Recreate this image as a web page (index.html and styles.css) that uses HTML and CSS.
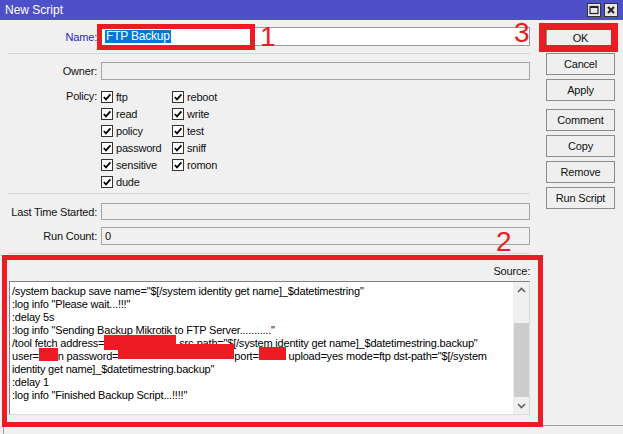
FILE: index.html
```html
<!DOCTYPE html>
<html lang='en'>
  <head>
    <meta charset='UTF-8'/>
    <title>New Script</title>
    <link rel="stylesheet" href="styles.css">
  </head>
  <body>
    <div class='window'>
      <div class='titlebar'>
        <span class='title'>New Script</span>
        <span class='tb-buttons'>
          <span class='tb-btn'>
            <svg width="10" height="10" viewBox="0 0 10 10"><rect x="1" y="1.5" width="8" height="7" fill="none" stroke="#222" stroke-width="1.2"/><line x1="1" y1="2" x2="9" y2="2" stroke="#222" stroke-width="2"/></svg>
          </span>
          <span class='tb-btn'>
            <svg width="10" height="10" viewBox="0 0 10 10"><path d="M2 2 L8 8 M8 2 L2 8" stroke="#222" stroke-width="2"/></svg>
          </span>
        </span>
      </div>

      <div class='main'>
        <div class='form'>
          <div class='row row-name'>
            <label class='lbl lbl-name'>Name:</label>
            <div class='field field-white'><span class='selected'>FTP Backup</span></div>
          </div>
          <div class='sep sep-top'></div>
          <div class='row row-owner'>
            <label class='lbl'>Owner:</label>
            <div class='field'></div>
          </div>
          <div class='policy'>
            <label class='lbl'>Policy:</label>
            <div class='checks'>
              <div class='check'><span class='box'><svg width="10" height="10" viewBox="0 0 10 10"><path d="M1.8 5 L4 7.4 L8.4 2.4" fill="none" stroke="#000" stroke-width="1.7"/></svg></span>ftp</div>
              <div class='check'><span class='box'><svg width="10" height="10" viewBox="0 0 10 10"><path d="M1.8 5 L4 7.4 L8.4 2.4" fill="none" stroke="#000" stroke-width="1.7"/></svg></span>reboot</div>
              <div class='check'><span class='box'><svg width="10" height="10" viewBox="0 0 10 10"><path d="M1.8 5 L4 7.4 L8.4 2.4" fill="none" stroke="#000" stroke-width="1.7"/></svg></span>read</div>
              <div class='check'><span class='box'><svg width="10" height="10" viewBox="0 0 10 10"><path d="M1.8 5 L4 7.4 L8.4 2.4" fill="none" stroke="#000" stroke-width="1.7"/></svg></span>write</div>
              <div class='check'><span class='box'><svg width="10" height="10" viewBox="0 0 10 10"><path d="M1.8 5 L4 7.4 L8.4 2.4" fill="none" stroke="#000" stroke-width="1.7"/></svg></span>policy</div>
              <div class='check'><span class='box'><svg width="10" height="10" viewBox="0 0 10 10"><path d="M1.8 5 L4 7.4 L8.4 2.4" fill="none" stroke="#000" stroke-width="1.7"/></svg></span>test</div>
              <div class='check'><span class='box'><svg width="10" height="10" viewBox="0 0 10 10"><path d="M1.8 5 L4 7.4 L8.4 2.4" fill="none" stroke="#000" stroke-width="1.7"/></svg></span>password</div>
              <div class='check'><span class='box'><svg width="10" height="10" viewBox="0 0 10 10"><path d="M1.8 5 L4 7.4 L8.4 2.4" fill="none" stroke="#000" stroke-width="1.7"/></svg></span>sniff</div>
              <div class='check'><span class='box'><svg width="10" height="10" viewBox="0 0 10 10"><path d="M1.8 5 L4 7.4 L8.4 2.4" fill="none" stroke="#000" stroke-width="1.7"/></svg></span>sensitive</div>
              <div class='check'><span class='box'><svg width="10" height="10" viewBox="0 0 10 10"><path d="M1.8 5 L4 7.4 L8.4 2.4" fill="none" stroke="#000" stroke-width="1.7"/></svg></span>romon</div>
              <div class='check'><span class='box'><svg width="10" height="10" viewBox="0 0 10 10"><path d="M1.8 5 L4 7.4 L8.4 2.4" fill="none" stroke="#000" stroke-width="1.7"/></svg></span>dude</div>
            </div>
          </div>
          <div class='sep sep-policy'></div>
          <div class='row row-started'>
            <label class='lbl'>Last Time Started:</label>
            <div class='field'></div>
          </div>
          <div class='row row-count'>
            <label class='lbl'>Run Count:</label>
            <div class='field'>0</div>
          </div>
          <div class='sep sep-count'></div>
          <div class='source-label'>Source:</div>
          <div class='editor'>
            <div class='code'>
              <div>/system backup save name="$[/system identity get name]_$datetimestring"</div>
              <div>:log info "Please wait...!!!"</div>
              <div>:delay 5s</div>
              <div>:log info "Sending Backup Mikrotik to FTP Server..........."</div>
              <div>/tool fetch address=<span class='redact r-addr'></span> src-path="$[/system identity get name]_$datetimestring.backup"</div>
              <div>user=<span class='redact r-user'></span>n password=<span class='redact r-pass'></span>port=<span class='redact r-port'></span> upload=yes mode=ftp dst-path="$[/system</div>
              <div>identity get name]_$datetimestring.backup"</div>
              <div>:delay 1</div>
              <div>:log info "Finished Backup Script...!!!!"</div>
            </div>
            <div class='scrollbar'>
              <span class='arrow'>
                <svg width="9" height="6" viewBox="0 0 9 6"><path d="M1 5 L4.5 1.5 L8 5" fill="none" stroke="#606060" stroke-width="1.6"/></svg>
              </span>
              <span class='thumb'></span>
              <span class='arrow arrow-down'>
                <svg width="9" height="6" viewBox="0 0 9 6"><path d="M1 1 L4.5 4.5 L8 1" fill="none" stroke="#606060" stroke-width="1.6"/></svg>
              </span>
            </div>
          </div>
        </div>

        <div class='actions'>
          <button class='btn'>OK</button>
          <button class='btn'>Cancel</button>
          <button class='btn'>Apply</button>
          <button class='btn btn-gap'>Comment</button>
          <button class='btn'>Copy</button>
          <button class='btn'>Remove</button>
          <button class='btn'>Run Script</button>
        </div>
      </div>

      <div class='statusbar'></div>

      <!-- red markup drawn over the dialog -->
      <div class='mark mark-name'></div>
      <div class='mark mark-ok'></div>
      <div class='mark mark-source'></div>
      <span class='num num-1'>1</span>
      <span class='num num-2'>2</span>
      <span class='num num-3'>3</span>
    </div>
  </body>
</html>
```

FILE: styles.css
```css
body {
  margin: 0;
  background-color: #F0F0F0;
  font-family: "Liberation Sans", Arial, sans-serif;
  font-size: 11px;
  letter-spacing: -0.2px;
  color: #111;
}

.window {
  position: relative;
  width: 623px;
  height: 434px;
  overflow: hidden;
}

.titlebar {
  height: 20px;
  background-color: #4E50C9;
  display: flex;
  align-items: center;
  justify-content: space-between;
  padding: 0 5px 0 5px;
}

.title {
  color: #fff;
  font-size: 12px;
  letter-spacing: 0;
}

.tb-buttons {
  display: flex;
  gap: 3px;
  margin-top: -1px;
}

.tb-btn {
  width: 12px;
  height: 12px;
  border: 1px solid #333;
  background-color: #E6E6E6;
  display: flex;
  align-items: center;
  justify-content: center;
}

.main {
  display: flex;
  height: 405px;
}

.form {
  width: 530px;
  padding-top: 7px;
}

.row {
  display: flex;
  align-items: center;
}

.lbl {
  width: 97px;
  text-align: right;
  flex-shrink: 0;
}

.lbl-name {
  color: #1F1FC0;
}

.field {
  flex: 1;
  margin-left: 4px;
  height: 16px;
  border: 1px solid #A5A5A5;
  padding-left: 3px;
  line-height: 16px;
  display: flex;
  align-items: center;
}

.field-white {
  background-color: #fff;
  border-color: #9A9A9A;
}

.row-name .field {
  height: 17px;
}

.selected {
  background-color: #0078D7;
  color: #fff;
  padding: 0 1px;
  line-height: 13px;
  font-size: 12px;
}

.sep {
  height: 0;
  border-top: 1px solid #D6D6D6;
  margin-left: 8px;
}

.sep-top {
  margin-top: 7px;
  margin-bottom: 8px;
}

.row-owner .field {
  height: 16px;
}

.policy {
  display: flex;
  align-items: flex-start;
  margin-top: 8px;
}

.policy .lbl {
  line-height: 17px;
}

.checks {
  display: grid;
  grid-template-columns: 71px auto;
  grid-auto-rows: 17px;
  margin-left: 4px;
}

.check {
  display: flex;
  align-items: center;
}

.box {
  width: 10px;
  height: 10px;
  border: 1px solid #333;
  background-color: #fff;
  margin-right: 3px;
  display: flex;
  align-items: center;
  justify-content: center;
}

.sep-policy {
  margin-top: 3px;
  margin-bottom: 9px;
}

.row-started .field {
  height: 15px;
}

.row-count {
  margin-top: 7px;
}

.sep-count {
  margin-top: 8px;
}

.source-label {
  text-align: right;
  line-height: 14px;
  margin-top: 10px;
}

.editor {
  position: relative;
  margin-top: 3px;
  margin-left: 9px;
  height: 132px;
  border: 1px solid #DCDCDC;
  border-top-color: #828282;
  border-left-color: #828282;
  background-color: #fff;
  display: flex;
}

.code {
  flex: 1;
  padding: 3px 0 0 2px;
  line-height: 13px;
  font-size: 11px;
  color: #000;
  white-space: nowrap;
  overflow: hidden;
}

.redact {
  display: inline-block;
  position: relative;
  vertical-align: top;
  background-color: #ED1C24;
}

.r-addr {
  width: 72px;
  height: 15px;
  margin-bottom: -2px;
  top: -2px;
}

.r-user {
  width: 19px;
  height: 13px;
  top: -2px;
}

.r-pass {
  width: 116px;
  height: 15px;
  margin-bottom: -2px;
  top: -6px;
}

.r-port {
  width: 27px;
  height: 13px;
  top: -3px;
}

.scrollbar {
  width: 16px;
  background-color: #F0F0F0;
  display: flex;
  flex-direction: column;
  align-items: center;
}

.arrow {
  height: 17px;
  display: flex;
  align-items: center;
  justify-content: center;
}

.arrow-down {
  margin-top: auto;
}

.thumb {
  width: 15px;
  height: 76px;
  margin-top: 24px;
  background-color: #CDCDCD;
}

.actions {
  margin-left: 16px;
  padding-top: 7px;
  width: 69px;
  display: flex;
  flex-direction: column;
  gap: 4px;
}

.btn {
  height: 22px;
  margin: 0;
  padding: 0;
  border: 1px solid #8C8C8C;
  background-color: #EFEFEF;
  font-family: "Liberation Sans", Arial, sans-serif;
  font-size: 11px;
  letter-spacing: -0.2px;
  color: #111;
}

.btn-gap {
  margin-top: 4px;
}

.statusbar {
  height: 9px;
  margin-left: 3px;
  border-top: 1px solid #A0A0A0;
  border-left: 1px solid #A0A0A0;
}

/* annotations */
.mark {
  position: absolute;
  border: 5px solid #ED1C24;
}

.mark-name {
  left: 97px;
  top: 24px;
  width: 148px;
  height: 16px;
}

.mark-ok {
  left: 539px;
  top: 23px;
  width: 65px;
  height: 15px;
  border-width: 7px;
}

.mark-source {
  left: 2px;
  top: 255px;
  width: 531px;
  height: 162px;
}

.num {
  position: absolute;
  color: #ED1C24;
  font-size: 28px;
  line-height: 28px;
  letter-spacing: 0;
}

.num-1 {
  left: 260px;
  top: 23px;
}

.num-2 {
  left: 496px;
  top: 228px;
}

.num-3 {
  left: 514px;
  top: 19px;
}
```
